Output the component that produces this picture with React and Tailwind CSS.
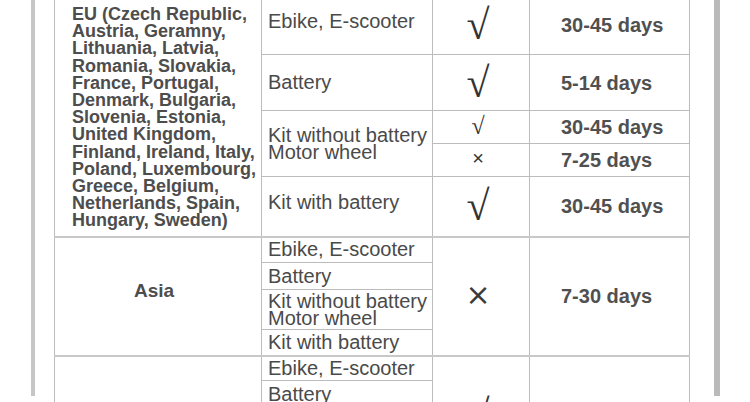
import React from 'react';

const cell = 'border border-[#bcbcbc] p-0';

const Check = ({ small }) => (
  <span
    className={
      small
        ? "font-['Liberation_Serif',serif] text-[24px] leading-none text-[#333]"
        : "font-['Liberation_Serif',serif] text-[42px] leading-none text-[#333]"
    }
  >
    √
  </span>
);

const euLines = [
  'EU (Czech Republic,',
  'Austria, Geramny,',
  'Lithuania, Latvia,',
  'Romania, Slovakia,',
  'France, Portugal,',
  'Denmark, Bulgaria,',
  'Slovenia, Estonia,',
  'United Kingdom,',
  'Finland, Ireland, Italy,',
  'Poland, Luxembourg,',
  'Greece, Belgium,',
  'Netherlands, Spain,',
  'Hungary, Sweden)',
];

const Item = ({ children, raise }) => (
  <div
    className={`pl-[6px] text-[20px] leading-[17px] text-[#4a4a4a] whitespace-nowrap ${raise ? 'pb-[7px]' : ''}`}
  >
    {children}
  </div>
);

const Days = ({ children }) => (
  <div className="pl-[31px] text-[20px] leading-none font-bold text-[#505050] whitespace-nowrap">{children}</div>
);

export default function App() {
  return (
    <div className="w-[750px] h-[402px] overflow-hidden bg-white font-['Liberation_Sans',Arial,sans-serif]">
      <div className="ml-[31px] w-[689px] h-[402px] border-l-[4px] border-l-[#c6c6c6] border-r-[6px] border-r-[#bababa] pl-[19px] bg-white">
        <table className="table-fixed border-collapse w-[635px] -mt-[6px]">
          <colgroup>
            <col className="w-[207px]" />
            <col className="w-[171px]" />
            <col className="w-[97px]" />
            <col className="w-[160px]" />
          </colgroup>
          <tbody>
            {/* EU */}
            <tr className="h-[60px]">
              <td rowSpan={5} className={`${cell} align-middle pt-[5px]`}>
                <div className="pl-[17px] text-[18px] leading-[17.2px] font-bold text-[#4d4d4d] whitespace-nowrap">
                  {euLines.map((l) => (
                    <div key={l}>{l}</div>
                  ))}
                </div>
              </td>
              <td className={cell}><Item raise>Ebike, E-scooter</Item></td>
              <td className={`${cell} text-center pr-[6px]`}><Check /></td>
              <td className={cell}><Days>30-45 days</Days></td>
            </tr>
            <tr className="h-[56px]">
              <td className={cell}><Item>Battery</Item></td>
              <td className={`${cell} text-center pr-[6px]`}><Check /></td>
              <td className={cell}><Days>5-14 days</Days></td>
            </tr>
            <tr className="h-[33px]">
              <td rowSpan={2} className={cell}>
                <Item>
                  Kit without battery
                  <br />
                  Motor wheel
                </Item>
              </td>
              <td className={`${cell} text-center pr-[6px]`}><Check small /></td>
              <td className={cell}><Days>30-45 days</Days></td>
            </tr>
            <tr className="h-[33px]">
              <td className={`${cell} text-center pr-[6px]`}>
                <span className="text-[20px] leading-none text-[#333]">×</span>
              </td>
              <td className={cell}><Days>7-25 days</Days></td>
            </tr>
            <tr className="h-[60px]">
              <td className={cell}><Item raise>Kit with battery</Item></td>
              <td className={`${cell} text-center pr-[6px]`}><Check /></td>
              <td className={cell}><Days>30-45 days</Days></td>
            </tr>

            {/* Asia */}
            <tr className="h-[26px]">
              <td rowSpan={4} className={`${cell} border-t-2 border-t-[#c8c8c8] text-center align-middle pb-[10px] pr-[8px]`}>
                <span className="text-[19px] font-bold text-[#4d4d4d]">Asia</span>
              </td>
              <td className={`${cell} border-t-2 border-t-[#c8c8c8]`}><Item>Ebike, E-scooter</Item></td>
              <td rowSpan={4} className={`${cell} border-t-2 border-t-[#c8c8c8] text-center pr-[6px]`}>
                <span className="font-['DejaVu_Sans',sans-serif] text-[30px] leading-none text-[#3a3a3a]">×</span>
              </td>
              <td rowSpan={4} className={`${cell} border-t-2 border-t-[#c8c8c8]`}><Days>7-30 days</Days></td>
            </tr>
            <tr className="h-[27px]">
              <td className={cell}><Item>Battery</Item></td>
            </tr>
            <tr className="h-[40px]">
              <td className={cell}>
                <Item>
                  Kit without battery
                  <br />
                  Motor wheel
                </Item>
              </td>
            </tr>
            <tr className="h-[26px]">
              <td className={cell}><Item>Kit with battery</Item></td>
            </tr>

            {/* next region */}
            <tr className="h-[25px]">
              <td rowSpan={4} className={`${cell} border-t-2 border-t-[#c8c8c8]`}></td>
              <td className={`${cell} border-t-2 border-t-[#c8c8c8]`}><Item>Ebike, E-scooter</Item></td>
              <td rowSpan={4} className={`${cell} border-t-2 border-t-[#c8c8c8] text-center pr-[6px]`}><Check /></td>
              <td rowSpan={4} className={`${cell} border-t-2 border-t-[#c8c8c8]`}></td>
            </tr>
            <tr className="h-[27px]">
              <td className={cell}><Item>Battery</Item></td>
            </tr>
            <tr className="h-[40px]">
              <td className={cell}>
                <Item>
                  Kit without battery
                  <br />
                  Motor wheel
                </Item>
              </td>
            </tr>
            <tr className="h-[26px]">
              <td className={cell}><Item>Kit with battery</Item></td>
            </tr>
          </tbody>
        </table>
      </div>
    </div>
  );
}
